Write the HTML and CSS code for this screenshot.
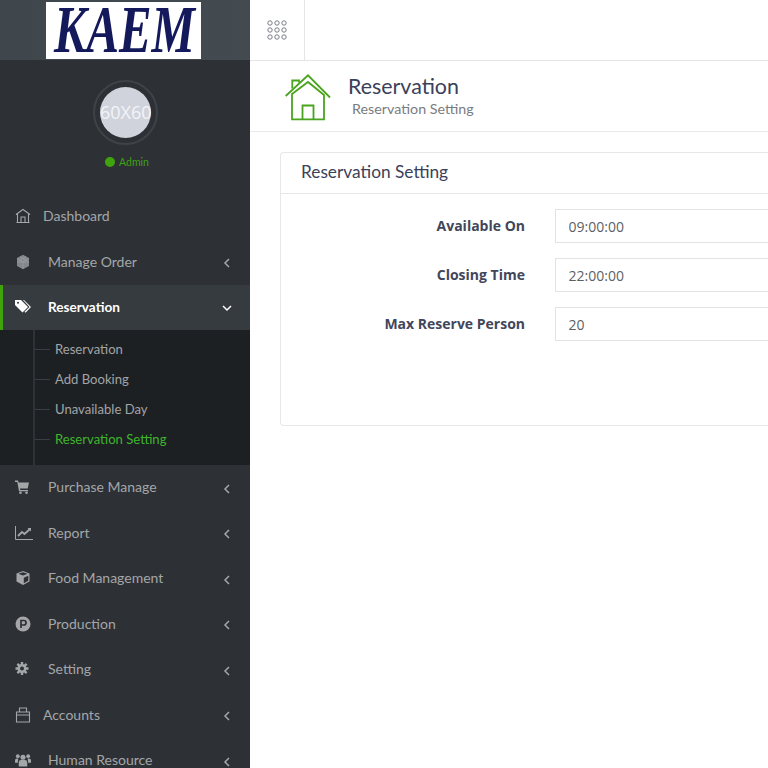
FILE: index.html
```html
<!DOCTYPE html>
<html lang="en">
<head>
<meta charset="utf-8">
<title>Reservation Setting</title>
<link rel="stylesheet" href="styles.css">
</head>
<body>
<div class="app">
  <aside class="sidebar">
    <div class="brand"><div class="logo"><svg class="logo-svg" viewBox="0 0 155 57"><text class="logo-text" x="8" y="50" textLength="141" lengthAdjust="spacingAndGlyphs">KAEM</text></svg></div></div>
    <div class="profile">
      <div class="avatar-ring"><div class="avatar">60X60</div></div>
      <div class="role"><span class="dot"></span>Admin</div>
    </div>
    <nav class="nav">
      <a class="item plain">
        <svg class="icon" viewBox="0 0 16 16"><path d="M1 6.500 8 1.500l7 5M2.500 6v8.500h11V6M1.500 14.500h13M6 14.500V9h4v5.500" fill="none" stroke="currentColor" stroke-width="1.100"/></svg>
        <span class="label">Dashboard</span>
      </a>
      <a class="item">
        <svg class="icon" viewBox="0 0 16 16"><path d="M8 .8l6 3.300v7.800L8 15.200l-6-3.300V4.100z" fill="#85888b"/><path d="M2 4.500 8 8l6-3.500M8 8v7M5 2.700l6 3.500M11 2.700 5 6.200M2 8h12" stroke="#a3a5a8" stroke-width=".6" fill="none"/></svg>
        <span class="label">Manage Order</span>
        <svg class="chev" viewBox="0 0 8 12"><path d="M6 2 2 6l4 4" fill="none" stroke="currentColor" stroke-width="1.500"/></svg>
      </a>
      <a class="item active">
        <svg class="icon" viewBox="0 0 16 16"><path d="M0 1h6l7 7-5.500 5.500L0 6z" fill="currentColor"/><path d="M8 1h1l7 7-5.500 5.800-1-1L14.500 8z" fill="currentColor"/><circle cx="3" cy="3.800" r="1" fill="#33383d"/></svg>
        <span class="label">Reservation</span>
        <svg class="chev" viewBox="0 0 12 8"><path d="M2 2l4 4 4-4" fill="none" stroke="currentColor" stroke-width="1.500"/></svg>
      </a>
      <ul class="submenu">
        <li class="sub">Reservation</li>
        <li class="sub">Add Booking</li>
        <li class="sub">Unavailable Day</li>
        <li class="sub current">Reservation Setting</li>
      </ul>
      <a class="item">
        <svg class="icon" viewBox="0 0 16 16"><path d="M0 1.500h3l.6 2H14l-1.300 6H5l.3 1.500h7.700v1.300H4L2.300 3H0z" fill="currentColor"/><circle cx="5.500" cy="13.800" r="1.300" fill="currentColor"/><circle cx="11.500" cy="13.800" r="1.300" fill="currentColor"/></svg>
        <span class="label">Purchase Manage</span>
        <svg class="chev" viewBox="0 0 8 12"><path d="M6 2 2 6l4 4" fill="none" stroke="currentColor" stroke-width="1.500"/></svg>
      </a>
      <a class="item">
        <svg class="icon wide" viewBox="0 0 18 14"><path d="M.5 0v13.500H18" fill="none" stroke="currentColor"/><path d="M3 10l4-4 2.500 2L15 3" fill="none" stroke="currentColor" stroke-width="1.800"/><path d="M12.500 2H16v3.500z" fill="currentColor"/></svg>
        <span class="label">Report</span>
        <svg class="chev" viewBox="0 0 8 12"><path d="M6 2 2 6l4 4" fill="none" stroke="currentColor" stroke-width="1.500"/></svg>
      </a>
      <a class="item">
        <svg class="icon" viewBox="0 0 16 16"><path d="M8 1l6.500 2.500v8L8 15l-6.500-3.500v-8z" fill="currentColor"/><path d="M8.800 7.800 13.300 5.800v5L8.800 13.200z" fill="#2d3136"/><path d="M3.500 3.700 8 2.200l4.500 1.500L8 5.500z" fill="#2d3136"/></svg>
        <span class="label">Food Management</span>
        <svg class="chev" viewBox="0 0 8 12"><path d="M6 2 2 6l4 4" fill="none" stroke="currentColor" stroke-width="1.500"/></svg>
      </a>
      <a class="item">
        <svg class="icon" viewBox="0 0 16 16"><circle cx="8" cy="8" r="7.500" fill="currentColor"/><path d="M6 12V4.500h2.800a2.200 2.200 0 0 1 0 4.500H6" fill="none" stroke="#2d3136" stroke-width="1.700"/></svg>
        <span class="label">Production</span>
        <svg class="chev" viewBox="0 0 8 12"><path d="M6 2 2 6l4 4" fill="none" stroke="currentColor" stroke-width="1.500"/></svg>
      </a>
      <a class="item">
        <svg class="icon" viewBox="0 0 16 16"><circle cx="7" cy="7.500" r="4.500" fill="currentColor"/><path d="M7 1v13M.500 7.500h13M2.400 2.900l9.200 9.200M11.600 2.900l-9.200 9.200" stroke="currentColor" stroke-width="2.400"/><circle cx="7" cy="7.500" r="2" fill="#2d3136"/></svg>
        <span class="label">Setting</span>
        <svg class="chev" viewBox="0 0 8 12"><path d="M6 2 2 6l4 4" fill="none" stroke="currentColor" stroke-width="1.500"/></svg>
      </a>
      <a class="item plain">
        <svg class="icon tall" viewBox="0 0 15 16"><path d="M1 5h13v10H1zM1 8h13M4 5V1h7v4" fill="none" stroke="currentColor" stroke-width="1.100"/></svg>
        <span class="label">Accounts</span>
        <svg class="chev" viewBox="0 0 8 12"><path d="M6 2 2 6l4 4" fill="none" stroke="currentColor" stroke-width="1.500"/></svg>
      </a>
      <a class="item">
        <svg class="icon" viewBox="0 0 17 16"><circle cx="8.500" cy="5" r="2.700" fill="currentColor"/><circle cx="3" cy="4" r="2" fill="currentColor"/><circle cx="14" cy="4" r="2" fill="currentColor"/><path d="M4 15V10.500a2.500 2.500 0 0 1 2.500-2.500h4A2.500 2.500 0 0 1 13 10.500V15z" fill="currentColor"/><path d="M0 11V8.500A2 2 0 0 1 2 6.500h1.500L3 11zM17 11V8.500a2 2 0 0 0-2-2h-1.500L14 11z" fill="currentColor"/></svg>
        <span class="label">Human Resource</span>
        <svg class="chev" viewBox="0 0 8 12"><path d="M6 2 2 6l4 4" fill="none" stroke="currentColor" stroke-width="1.500"/></svg>
      </a>
    </nav>
  </aside>
  <main class="main">
    <header class="topbar">
      <div class="toggle">
        <svg class="grid-icon" viewBox="0 0 20 20">
          <g fill="none" stroke="#7b7e86" stroke-width="1">
            <circle cx="3" cy="3" r="2.200"/><circle cx="10" cy="3" r="2.200"/><circle cx="17" cy="3" r="2.200"/>
            <circle cx="3" cy="10" r="2.200"/><circle cx="10" cy="10" r="2.200"/><circle cx="17" cy="10" r="2.200"/>
            <circle cx="3" cy="17" r="2.200"/><circle cx="10" cy="17" r="2.200"/><circle cx="17" cy="17" r="2.200"/>
          </g>
        </svg>
      </div>
    </header>
    <section class="page-head">
      <svg class="house" viewBox="0 0 46 46" aria-hidden="true">
        <g fill="none" stroke="#4aa41e" stroke-width="1.800">
          <path d="M.7 21.500 23 .8 45 23"/>
          <path d="M7.300 14V6h6.700v2"/>
          <path d="M7 19.500 23 7.500l16 13v24.300H7z"/>
          <path d="M17.500 44.800V31h11v13.800"/>
        </g>
      </svg>
      <div class="head-text">
        <h1 class="head-title">Reservation</h1>
        <p class="head-sub">Reservation Setting</p>
      </div>
    </section>
    <section class="content">
      <div class="card">
        <h2 class="card-title">Reservation Setting</h2>
        <form class="card-body">
          <div class="row"><label class="field-label">Available On</label><input class="field" value="09:00:00" readonly></div>
          <div class="row"><label class="field-label">Closing Time</label><input class="field" value="22:00:00" readonly></div>
          <div class="row"><label class="field-label">Max Reserve Person</label><input class="field" value="20" readonly></div>
        </form>
      </div>
    </section>
  </main>
</div>
</body>
</html>
```
FILE: styles.css
```css
* { box-sizing: border-box; }
html, body { margin: 0; height: 100%; overflow: hidden; background: #fff; }
body { font-family: "Open Sans", "Liberation Sans", sans-serif; }
.app { display: flex; width: 768px; height: 768px; overflow: hidden; }

.sidebar { width: 250px; flex: none; height: 768px; background: #2d3136; overflow: hidden; font-family: Lato, "Noto Sans", sans-serif; }
.brand { height: 60px; background: linear-gradient(90deg, #3f474c, #434b50); display: flex; justify-content: flex-start; padding: 2px 0 0 46px; }
.logo { width: 155px; height: 57px; background: #fff; }
.logo-svg { display: block; width: 155px; height: 57px; overflow: visible; }
.logo-text { font-family: "Liberation Serif", serif; font-weight: 700; font-style: italic; font-size: 68px; fill: #14195c; }

.profile { height: 133.5px; padding-top: 20px; display: flex; flex-direction: column; align-items: center; }
.avatar-ring { width: 65px; height: 65px; border-radius: 50%; border: 2px solid #3f4348; padding: 5px; margin-left: 1px; }
.avatar { width: 51px; height: 51px; border-radius: 50%; background: #d0d3dc; color: #f3f4f7; font-size: 18px; line-height: 51px; text-align: center; white-space: nowrap; font-family: "Open Sans", sans-serif; }
.role { margin-top: 10px; color: #3ea113; font-size: 10.500px; line-height: 14px; display: flex; align-items: center; gap: 4px; margin-left: 4px; }
.dot { width: 10px; height: 10px; border-radius: 50%; background: #3fa40c; }

.nav { display: flex; flex-direction: column; }
.item { height: 45.5px; flex: none; display: flex; align-items: center; padding: 0 19px 0 15px; color: #a4a6a8; font-size: 14px; }
.icon { width: 16px; height: 16px; flex: none; margin-right: 17px; }
.icon.wide { width: 18px; height: 14px; margin-right: 15px; }
.item.plain .icon { margin-right: 12px; }
.label { flex: 1; white-space: nowrap; margin-top: -1px; }
.chev { width: 8px; height: 12px; flex: none; margin-top: 3px; }
.item.active { height: 45px; background: #363b40; color: #fff; border-left: 3px solid #3fa40c; padding-left: 12px; font-weight: 700; }
.item.active .label { font-size: 13.600px; }
.item.active .chev { width: 12px; height: 8px; margin-right: -2px; margin-top: 1px; }
.submenu { list-style: none; margin: 0; height: 135px; padding: 4px 0 0 0; background: #1d2023; position: relative; }
.submenu::before { content: ""; position: absolute; left: 33px; top: 0; bottom: 0; width: 2px; background: #2f3338; }
.sub { height: 30px; line-height: 30px; padding-left: 55px; color: #a2a4a6; font-size: 13.100px; position: relative; white-space: nowrap; }
.sub::before { content: ""; position: absolute; left: 35px; top: 15px; width: 15px; height: 1px; background: #3a3e43; }
.sub.current { color: #3fb52b; }

.main { flex: 1; min-width: 0; display: flex; flex-direction: column; }
.topbar { height: 61px; flex: none; border-bottom: 1px solid #e4e5e7; display: flex; }
.toggle { width: 55px; height: 60px; border-right: 1px solid #e4e5e7; display: flex; align-items: center; justify-content: center; }
.grid-icon { width: 20px; height: 20px; }
.page-head { height: 71px; flex: none; border-bottom: 1px solid #e8e9eb; display: flex; align-items: flex-start; padding: 13px 0 0 35px; }
.house { width: 46px; height: 47px; flex: none; }
.head-text { margin-left: 17px; margin-top: -1px; font-family: Lato, sans-serif; }
.head-title { margin: 0; font-size: 21.400px; line-height: 26px; font-weight: 400; color: #3b4159; }
.head-sub { margin: 0 0 0 4px; font-size: 14.300px; line-height: 20px; color: #7a7c80; }

.content { padding: 20px 0 0 30px; }
.card { width: 520px; height: 274px; border: 1px solid #e6e7e9; border-right: 0; border-radius: 4px 0 0 4px; }
.card-title { margin: 0; height: 41px; padding-left: 20px; border-bottom: 1px solid #e6e7e9; font-family: Lato, sans-serif; font-size: 17.300px; font-weight: 400; line-height: 38px; color: #3b4159; }
.card-body { padding-top: 15px; display: flex; flex-direction: column; gap: 15px; }
.row { display: flex; align-items: center; height: 34px; }
.field-label { width: 244px; flex: none; text-align: right; font-size: 14px; line-height: 31px; height: 32px; font-weight: 700; color: #42465a; white-space: nowrap; }
.field { margin-left: 30px; width: 300px; height: 34px; flex: none; border: 1px solid #e2e3e5; border-right: 0; padding: 0 12.500px; font-family: "Open Sans", sans-serif; font-size: 14px; color: #5d5f63; background: #fff; outline: 0; border-radius: 0; }
```
